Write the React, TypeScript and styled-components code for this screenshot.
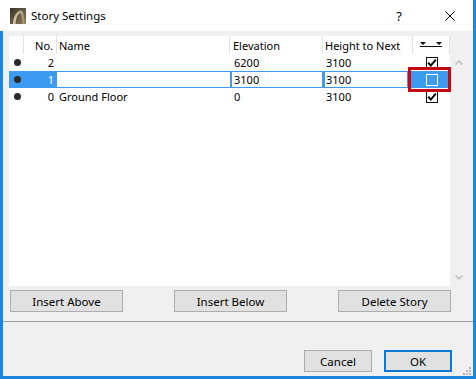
import React from 'react';
import styled, { createGlobalStyle } from 'styled-components';

const BLUE = '#1c86dc';
const SEL = '#3c9af0';
const COLS = '15px 33px 173px 93px 90px 37px';
const FONT = '"Noto Sans", "Segoe UI", sans-serif';

const Global = createGlobalStyle`
  html, body { margin: 0; padding: 0; background: #ffffff; }
  body { font-family: ${FONT}; font-size: 11px; color: #000; }
  * { box-sizing: border-box; }
`;

const Window = styled.div`
  position: relative;
  width: 476px;
  height: 379px;
  display: flex;
  flex-direction: column;
  border-right: 3px solid ${BLUE};
  background: #ffffff;
  overflow: hidden;
`;

const TitleBar = styled.div`
  height: 31px;
  flex: none;
  display: flex;
  align-items: center;
  padding-left: 10px;
  gap: 5px;
  background: #ffffff;
`;

const TitleText = styled.span`
  font-size: 11.5px;
  color: #000;
`;

const CaptionButton = styled.div<{ $first?: boolean }>`
  width: 46px;
  height: 31px;
  display: flex;
  align-items: center;
  justify-content: center;
  margin-left: ${(p) => (p.$first ? 'auto' : '0')};
  font-size: 13px;
  color: #000;
`;

const Body = styled.div`
  position: relative;
  flex: 1;
  display: flex;
  flex-direction: column;
  background: #f0f0f0;
  border-left: 3px solid ${BLUE};
  border-bottom: 3px solid ${BLUE};
`;

const Content = styled.div`
  padding: 5px 6px 0 6px;
  display: flex;
  flex-direction: column;
`;

const Panel = styled.div`
  height: 250px;
  display: flex;
  flex-direction: column;
`;

const HeaderRow = styled.div`
  display: grid;
  grid-template-columns: ${COLS};
  width: 440px;
  height: 18px;
  background: #ffffff;
`;

const HeaderCell = styled.div<{ $right?: boolean; $pad?: number; $center?: boolean }>`
  display: flex;
  align-items: center;
  justify-content: ${(p) => (p.$center ? 'center' : p.$right ? 'flex-end' : 'flex-start')};
  padding: ${(p) => (p.$right ? `0 ${p.$pad ?? 0}px 0 0` : `0 0 0 ${p.$pad ?? 0}px`)};
  border-right: 1px solid #e3e3e3;
  white-space: nowrap;
  color: #000;
`;

const ListArea = styled.div`
  flex: 1;
  display: flex;
`;

const Rows = styled.div`
  width: 441px;
  background: #ffffff;
  display: flex;
  flex-direction: column;
`;

const Scrollbar = styled.div`
  width: 17px;
  display: flex;
  flex-direction: column;
  justify-content: space-between;
  background: #f0f0f0;
`;

const ScrollButton = styled.div`
  height: 17px;
  display: flex;
  align-items: center;
  justify-content: center;
`;

const Row = styled.div<{ $selected?: boolean }>`
  display: grid;
  grid-template-columns: ${COLS};
  height: 17px;
  background: ${(p) => (p.$selected ? SEL : '#ffffff')};
`;

const Cell = styled.div<{
  $right?: boolean;
  $pad?: number;
  $center?: boolean;
  $white?: boolean;
  $edit?: string;
  $light?: boolean;
}>`
  position: relative;
  display: flex;
  align-items: center;
  justify-content: ${(p) => (p.$center ? 'center' : p.$right ? 'flex-end' : 'flex-start')};
  padding: ${(p) => (p.$right ? `0 ${p.$pad ?? 0}px 0 0` : `0 0 0 ${p.$pad ?? 0}px`)};
  margin: ${(p) => p.$edit ?? '0'};
  background: ${(p) => (p.$white ? '#ffffff' : 'transparent')};
  color: ${(p) => (p.$light ? '#ffffff' : '#000000')};
  white-space: nowrap;
`;

const Dot = styled.span`
  flex: none;
  width: 7px;
  height: 7px;
  border-radius: 50%;
  background: #2b2b2b;
  margin-left: 2px;
`;

const CheckBox = styled.span<{ $onBlue?: boolean }>`
  flex: none;
  width: 12px;
  height: 12px;
  display: flex;
  align-items: center;
  justify-content: center;
  border: ${(p) => (p.$onBlue ? '1.5px solid #ffffff' : '1px solid #111111')};
  background: ${(p) => (p.$onBlue ? 'transparent' : '#ffffff')};
`;

const RedMark = styled.div`
  position: absolute;
  left: -5px;
  right: -1px;
  top: -4px;
  bottom: -4px;
  border: 3px solid #c10a14;
  z-index: 2;
  pointer-events: none;
`;

const ButtonRow = styled.div`
  display: flex;
  justify-content: space-between;
  margin-top: 4px;
  padding: 0 16px 0 1px;
`;

const Button = styled.button<{ $w: number; $default?: boolean }>`
  width: ${(p) => p.$w}px;
  height: 22px;
  padding: 0;
  font-family: ${FONT};
  font-size: 11.5px;
  color: #000;
  background: #e1e1e1;
  border: ${(p) => (p.$default ? '2px solid #0a78d6' : '1px solid #adadad')};
  display: flex;
  align-items: center;
  justify-content: center;
`;

const Separator = styled.div`
  height: 1px;
  margin-top: 9px;
  background: #a0a0a0;
`;

const Footer = styled.div`
  display: flex;
  justify-content: flex-end;
  gap: 12px;
  padding: 28px 21px 0 0;
`;

const Grip = styled.svg`
  position: absolute;
  right: 2px;
  bottom: 1px;
`;

const Check = () => (
  <svg width="10" height="10" viewBox="0 0 10 10">
    <path d="M1.2 4.8 L3.8 7.6 L8.8 1.6" fill="none" stroke="#000" strokeWidth="2" />
  </svg>
);

const AppIcon = () => (
  <svg width="16" height="16" viewBox="0 0 16 16">
    <defs>
      <linearGradient id="ai" x1="0" y1="0" x2="1" y2="1">
        <stop offset="0" stopColor="#3a342d" />
        <stop offset="1" stopColor="#8c7a5b" />
      </linearGradient>
      <linearGradient id="arch" x1="0" y1="0" x2="1" y2="0">
        <stop offset="0" stopColor="#d9ccb0" />
        <stop offset="1" stopColor="#9f8c68" />
      </linearGradient>
    </defs>
    <rect x="0" y="0" width="16" height="16" fill="url(#ai)" />
    <path d="M3 16 C3.5 8 7 2.5 11 2.5 C13 2.5 14 5 15 16 L12.5 16 C12 8 11 5.5 10 5.5 C8 5.5 6 10 5.5 16 Z" fill="url(#arch)" />
  </svg>
);

const SortIcon = () => (
  <svg width="22" height="6" viewBox="0 0 22 6">
    <path d="M0 0 H6 L3 3 Z M16 0 H22 L19 3 Z" fill="#111" />
    <rect x="0" y="4" width="22" height="1" fill="#111" />
  </svg>
);

const Chevron = ({ up }: { up?: boolean }) => (
  <svg width="8" height="5" viewBox="0 0 8 5">
    <path
      d={up ? 'M0.7 4.3 L4 1.2 L7.3 4.3' : 'M0.7 0.7 L4 3.8 L7.3 0.7'}
      fill="none"
      stroke="#c2c2c2"
      strokeWidth="1.8"
    />
  </svg>
);

type Story = { no: string; name: string; elev: string; height: string; checked: boolean; selected?: boolean };

const stories: Story[] = [
  { no: '2', name: '', elev: '6200', height: '3100', checked: true },
  { no: '1', name: '', elev: '3100', height: '3100', checked: false, selected: true },
  { no: '0', name: 'Ground Floor', elev: '0', height: '3100', checked: true },
];

export default function App() {
  return (
    <>
      <Global />
      <Window>
        <TitleBar>
          <AppIcon />
          <TitleText>Story Settings</TitleText>
          <CaptionButton $first>?</CaptionButton>
          <CaptionButton>
            <svg width="10" height="10" viewBox="0 0 10 10">
              <path d="M0.5 0.5 L9.5 9.5 M9.5 0.5 L0.5 9.5" stroke="#000" strokeWidth="1" />
            </svg>
          </CaptionButton>
        </TitleBar>
        <Body>
          <Content>
            <Panel>
              <HeaderRow>
                <HeaderCell />
                <HeaderCell $right $pad={3}>No.</HeaderCell>
                <HeaderCell $pad={2}>Name</HeaderCell>
                <HeaderCell $pad={3}>Elevation</HeaderCell>
                <HeaderCell $pad={2}>Height to Next</HeaderCell>
                <HeaderCell $center>
                  <SortIcon />
                </HeaderCell>
              </HeaderRow>
              <ListArea>
                <Rows>
                  {stories.map((s) =>
                    s.selected ? (
                      <Row key={s.no} $selected>
                        <Cell $center>
                          <Dot />
                        </Cell>
                        <Cell $right $pad={3} $light>
                          {s.no}
                        </Cell>
                        <Cell $white $pad={2} $edit="1px 0 1px 0">
                          {s.name}
                        </Cell>
                        <Cell $white $pad={2} $edit="1px 1px 1px 2px">
                          {s.elev}
                        </Cell>
                        <Cell $white $pad={1} $edit="1px 6px 1px 2px">
                          {s.height}
                        </Cell>
                        <Cell $center>
                          <CheckBox $onBlue />
                          <RedMark />
                        </Cell>
                      </Row>
                    ) : (
                      <Row key={s.no}>
                        <Cell $center>
                          <Dot />
                        </Cell>
                        <Cell $right $pad={3}>
                          {s.no}
                        </Cell>
                        <Cell $pad={2}>{s.name}</Cell>
                        <Cell $pad={4}>{s.elev}</Cell>
                        <Cell $pad={3}>{s.height}</Cell>
                        <Cell $center>
                          <CheckBox>{s.checked && <Check />}</CheckBox>
                        </Cell>
                      </Row>
                    )
                  )}
                </Rows>
                <Scrollbar>
                  <ScrollButton>
                    <Chevron up />
                  </ScrollButton>
                  <ScrollButton>
                    <Chevron />
                  </ScrollButton>
                </Scrollbar>
              </ListArea>
            </Panel>
            <ButtonRow>
              <Button $w={113}>Insert Above</Button>
              <Button $w={113}>Insert Below</Button>
              <Button $w={113}>Delete Story</Button>
            </ButtonRow>
          </Content>
          <Separator />
          <Footer>
            <Button $w={68}>Cancel</Button>
            <Button $w={68} $default>
              OK
            </Button>
          </Footer>
          <Grip width="8" height="8" viewBox="0 0 8 8">
            <g fill="#b8b8b8">
              <rect x="6" y="0" width="2" height="2" />
              <rect x="3" y="3" width="2" height="2" />
              <rect x="6" y="3" width="2" height="2" />
              <rect x="0" y="6" width="2" height="2" />
              <rect x="3" y="6" width="2" height="2" />
              <rect x="6" y="6" width="2" height="2" />
            </g>
          </Grip>
        </Body>
      </Window>
    </>
  );
}
